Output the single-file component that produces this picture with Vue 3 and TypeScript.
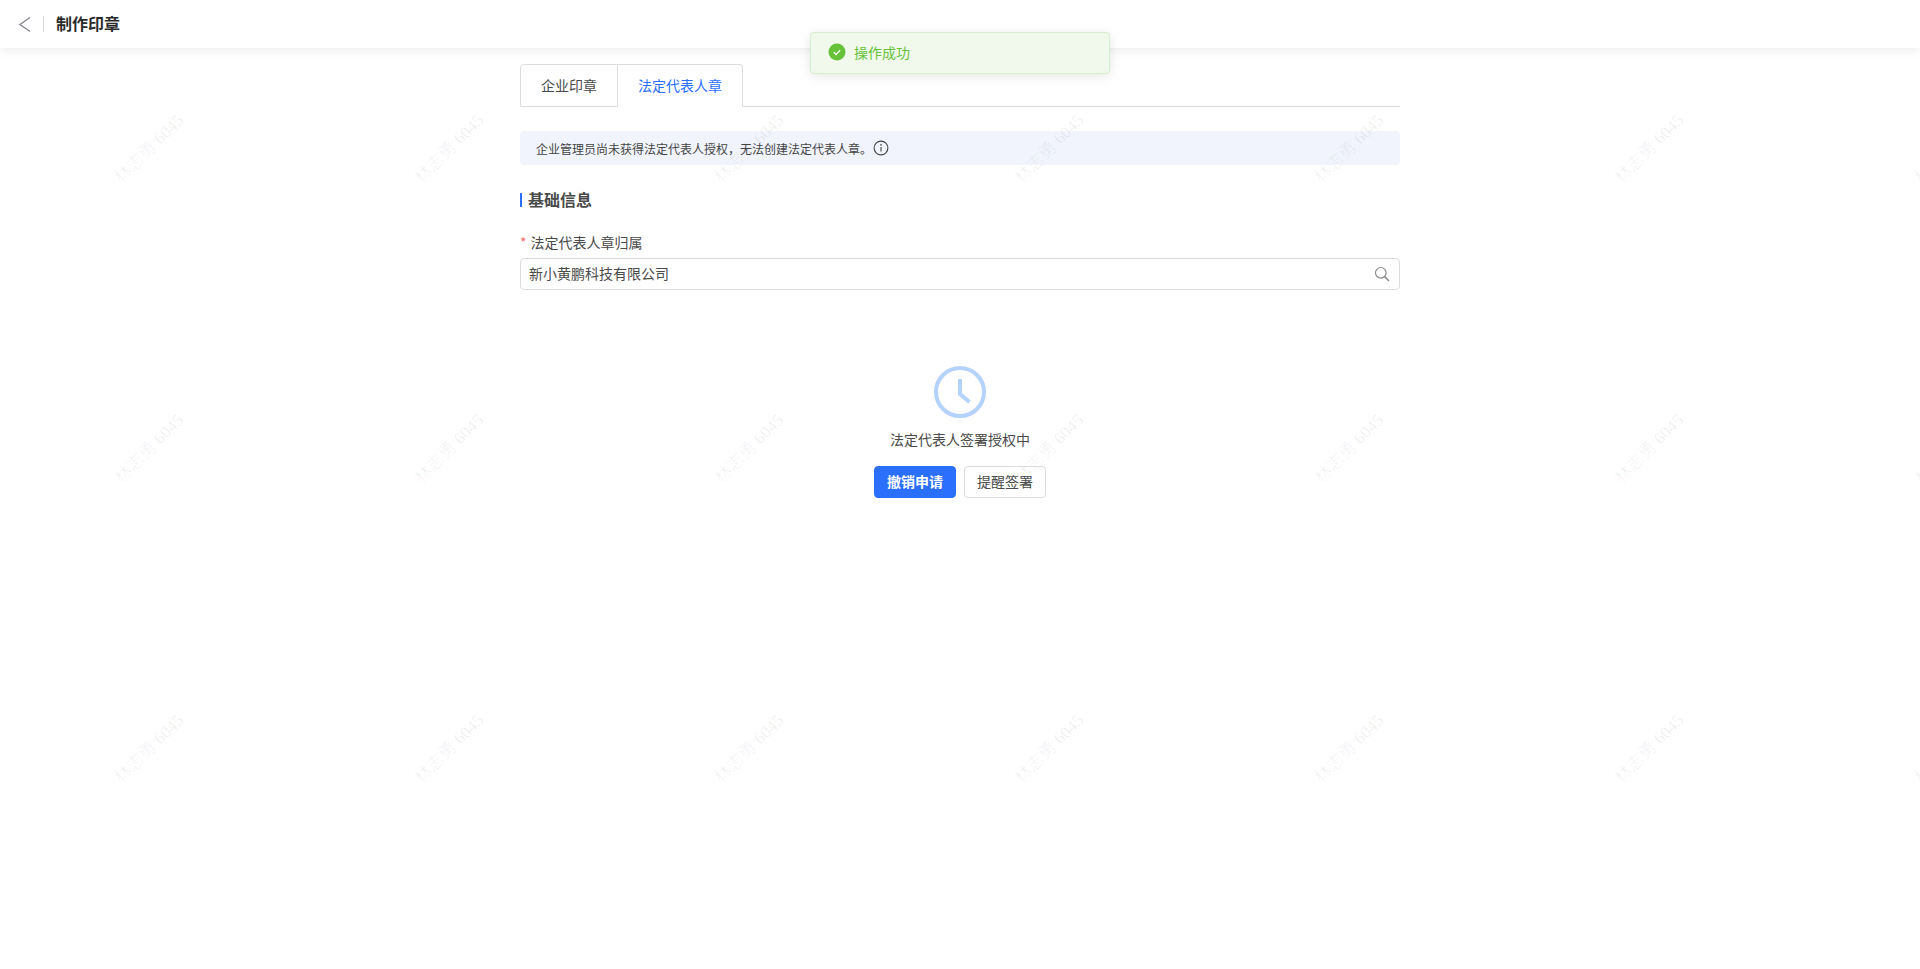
<script setup lang="ts">
import { ref } from "vue";

const tabs = ["企业印章", "法定代表人章"];
const activeTab = ref(1);
const company = ref("新小黄鹏科技有限公司");
const marks = Array.from({ length: 28 }, (_, i) => i);
</script>

<template>
  <div class="page">
    <header class="top-bar">
      <svg class="back" width="14" height="17" viewBox="0 0 14 17" fill="none">
        <path d="M12 1.5 2 8.5l10 7" stroke="#85858f" stroke-width="1.3" />
      </svg>
      <span class="top-divider"></span>
      <h1 class="top-title">制作印章</h1>
    </header>

    <main class="content">
      <div class="tabs">
        <button
          v-for="(tab, i) in tabs"
          :key="tab"
          class="tab"
          :class="{ active: activeTab === i }"
          @click="activeTab = i"
        >
          {{ tab }}
        </button>
      </div>

      <div class="notice">
        <span>企业管理员尚未获得法定代表人授权，无法创建法定代表人章。</span>
        <svg width="16" height="16" viewBox="0 0 16 16" fill="none">
          <circle cx="8" cy="8" r="6.9" stroke="#444" stroke-width="1.1" />
          <path d="M8 7v4.600" stroke="#444" stroke-width="1.1" />
          <circle cx="8" cy="4.900" r=".8" fill="#444" />
        </svg>
      </div>

      <h2 class="section-title">基础信息</h2>

      <label class="field-label"><i>*</i>法定代表人章归属</label>
      <div class="field">
        <input v-model="company" class="field-input" />
        <svg width="16" height="16" viewBox="0 0 16 16" fill="none">
          <circle cx="6.800" cy="6.800" r="5.300" stroke="#8a8a8a" stroke-width="1.2" />
          <path d="m10.600 10.600 4.400 4.400" stroke="#8a8a8a" stroke-width="1.5" />
        </svg>
      </div>

      <section class="status">
        <svg width="52" height="52" viewBox="0 0 52 52" fill="none">
          <circle cx="26" cy="26" r="24" stroke="#b5d2fd" stroke-width="4" />
          <path d="M26 13v15l9.500 8" stroke="#b5d2fd" stroke-width="4" />
        </svg>
        <p class="status-text">法定代表人签署授权中</p>
        <div class="actions">
          <button class="btn primary">撤销申请</button>
          <button class="btn">提醒签署</button>
        </div>
      </section>
    </main>

    <div class="toast">
      <svg width="18" height="18" viewBox="0 0 18 18" fill="none">
        <circle cx="9" cy="9" r="8.500" fill="#67c23a" />
        <path d="m5.800 9.200 2.300 2.300 4.100-4.400" stroke="#fff" stroke-width="1.300" />
      </svg>
      <span>操作成功</span>
    </div>

    <div class="watermarks">
      <span v-for="m in marks" :key="m" class="mark-cell">
        <span class="mark">林志勇 6045</span>
      </span>
    </div>
  </div>
</template>

<style scoped>
.page {
  position: relative;
  height: 969px;
  overflow: hidden;
  background: #fff;
  font-family: "Noto Sans CJK SC", "Liberation Sans", sans-serif;
  color: #4a4a4a;
}

.top-bar {
  display: flex;
  align-items: center;
  height: 48px;
  padding-left: 18px;
  box-sizing: border-box;
  background: #fff;
  box-shadow: 0 2px 10px rgba(0, 0, 0, 0.08);
}

.top-divider {
  width: 1px;
  height: 16px;
  margin: 0 12px 0 11px;
  background: #d9d9d9;
}

.top-title {
  margin: 0 0 2px;
  font-size: 16px;
  font-weight: 700;
  color: #2b2b2b;
}

.content {
  width: 880px;
  margin: 16px auto 0;
}

.tabs {
  display: flex;
  height: 43px;
  box-sizing: border-box;
  border-bottom: 1px solid #dcdcdc;
}

.tab {
  height: 43px;
  padding: 0 20px 2px;
  border: 1px solid #dcdcdc;
  border-left: 0;
  background: #fff;
  font: inherit;
  font-size: 14px;
  color: #4a4a4a;
  cursor: pointer;
}

.tab:first-child {
  border-left: 1px solid #dcdcdc;
  border-radius: 4px 0 0 0;
}

.tab:last-child {
  border-radius: 0 4px 0 0;
}

.tab.active {
  border-bottom-color: #fff;
  color: #2b6fff;
}

.notice {
  display: flex;
  align-items: center;
  gap: 1px;
  height: 34px;
  margin-top: 24px;
  padding: 0 16px;
  border-radius: 4px;
  background: #f1f4fd;
  font-size: 12px;
  color: #444;
}

.section-title {
  display: flex;
  align-items: center;
  gap: 6px;
  height: 20px;
  margin: 24px 0 0;
  font-size: 16px;
  font-weight: 700;
  line-height: 16px;
  color: #4a4a4a;
}

.section-title::before {
  content: "";
  width: 2px;
  height: 14px;
  margin-top: 2px;
  background: #2b6fff;
}

.field-label {
  display: block;
  margin-top: 23px;
  font-size: 14px;
  line-height: 20px;
  color: #4a4a4a;
}

.field-label i {
  margin-right: 4px;
  font-style: normal;
  color: #f56c6c;
}

.field {
  display: flex;
  align-items: center;
  height: 32px;
  margin-top: 6px;
  padding: 0 9px 0 8px;
  box-sizing: border-box;
  border: 1px solid #dcdcdc;
  border-radius: 4px;
}

.field-input {
  flex: 1;
  height: 28px;
  border: 0;
  outline: 0;
  padding: 0;
  margin-bottom: 2px;
  background: transparent;
  font: inherit;
  font-size: 14px;
  color: #4a4a4a;
}

.status {
  display: flex;
  flex-direction: column;
  align-items: center;
  margin-top: 76px;
}

.status-text {
  margin: 11px 0 0;
  font-size: 14px;
  line-height: 20px;
  color: #4a4a4a;
}

.actions {
  display: flex;
  gap: 8px;
  margin-top: 17px;
}

.btn {
  width: 82px;
  height: 32px;
  padding: 0 0 2px;
  border: 1px solid #dcdcdc;
  border-radius: 4px;
  background: #fff;
  font: inherit;
  font-size: 14px;
  color: #4a4a4a;
  cursor: pointer;
}

.btn.primary {
  border-color: #2b6fff;
  background: #2b6fff;
  font-weight: 700;
  color: #fff;
}

.toast {
  position: absolute;
  top: 32px;
  left: 810px;
  display: flex;
  align-items: center;
  gap: 8px;
  width: 300px;
  height: 42px;
  padding: 0 0 2px 17px;
  box-sizing: border-box;
  border: 1px solid #d5eecb;
  border-radius: 4px;
  background: #f0f9eb;
  box-shadow: 0 2px 12px rgba(0, 0, 0, 0.1);
  font-size: 14px;
  color: #67c23a;
}

.watermarks {
  position: absolute;
  inset: 0;
  display: grid;
  grid-template-columns: repeat(7, 300px);
  grid-auto-rows: 300px;
  pointer-events: none;
}

.mark-cell {
  display: flex;
  align-items: center;
  justify-content: center;
}

.mark {
  transform: translate(-2px, -3px) rotate(-45deg);
  font-family: "Liberation Serif", "Noto Sans CJK SC", serif;
  font-size: 17px;
  font-weight: 300;
  white-space: nowrap;
  color: rgba(0, 0, 0, 0.075);
}
</style>
